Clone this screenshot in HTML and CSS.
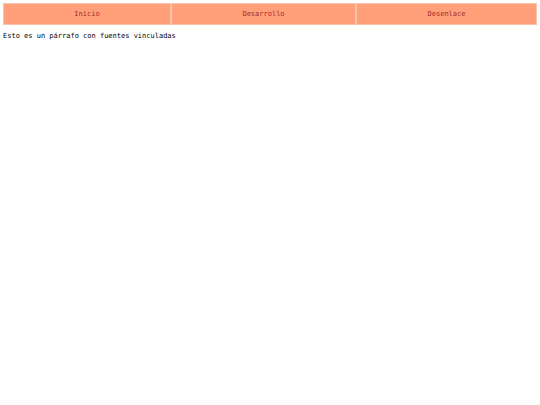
FILE: index.html
```html
<!DOCTYPE html>
<html lang="es">
<head>
<meta charset="utf-8">
<link rel="stylesheet" href="styles.css">
</head>
<body>
<nav class="menu">
  <div class="item">Inicio</div>
  <div class="item">Desarrollo</div>
  <div class="item">Desenlace</div>
</nav>
<p class="texto">Esto es un párrafo con fuentes vinculadas</p>
</body>
</html>
```
FILE: styles.css
```css
html, body {
  background: #ffffff;
}
body {
  margin: 3px;
  font-family: "DejaVu Sans Mono", monospace;
  font-size: 7px;
  color: #000;
}
.menu {
  display: grid;
  grid-template-columns: 168fr 185fr 181fr;
  gap: 0;
  width: 534px;
}
.item {
  background: #ffa07a;
  border: 1px solid #f7c4aa;
  height: 20px;
  display: flex;
  align-items: center;
  justify-content: center;
  color: #a52a2a;
}
.texto {
  margin: 7px 0 0 0;
}
```
